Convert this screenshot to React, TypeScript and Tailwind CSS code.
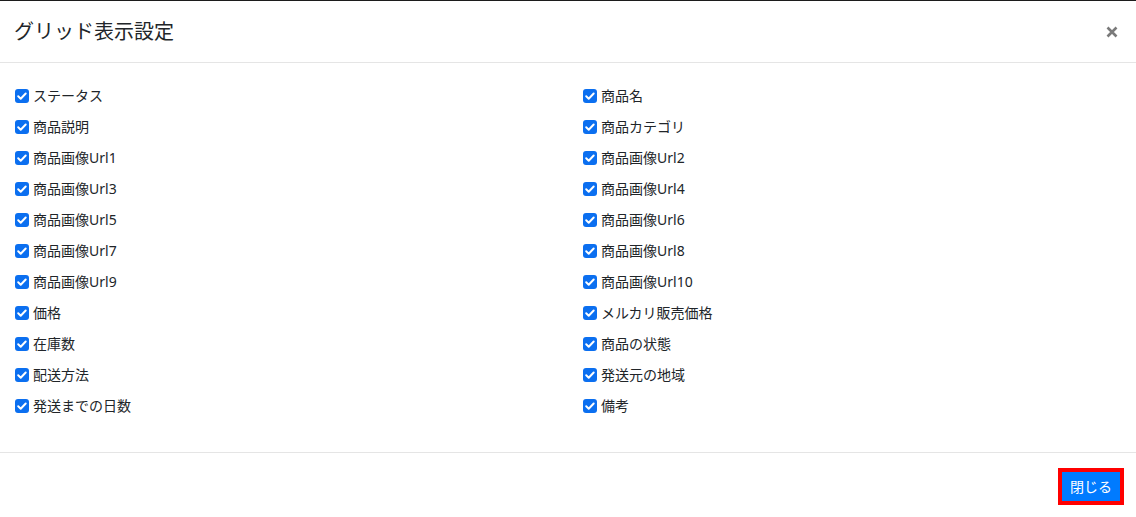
const columns: [string, string][] = [
  ["ステータス", "商品名"],
  ["商品説明", "商品カテゴリ"],
  ["商品画像Url1", "商品画像Url2"],
  ["商品画像Url3", "商品画像Url4"],
  ["商品画像Url5", "商品画像Url6"],
  ["商品画像Url7", "商品画像Url8"],
  ["商品画像Url9", "商品画像Url10"],
  ["価格", "メルカリ販売価格"],
  ["在庫数", "商品の状態"],
  ["配送方法", "発送元の地域"],
  ["発送までの日数", "備考"],
];

function Check({ label }: { label: string }) {
  return (
    <label className="flex h-[31px] items-center gap-[4px] text-[14px] text-[#212529]">
      <span className="flex h-[14px] w-[14px] shrink-0 items-center justify-center rounded-[3px] bg-[#0b6ff0]">
        <svg viewBox="0 0 14 14" className="h-[14px] w-[14px]">
          <path
            d="M3.2 7.3l2.5 2.4 5-5.2"
            fill="none"
            stroke="white"
            strokeWidth="2"
            strokeLinecap="round"
            strokeLinejoin="round"
          />
        </svg>
      </span>
      <span>{label}</span>
    </label>
  );
}

export default function App() {
  return (
    <div
      className="h-[517px] w-[1136px] overflow-hidden bg-white"
      style={{ fontFamily: '"Noto Sans", "Noto Sans CJK JP", sans-serif' }}
    >
      <div className="h-px bg-[#1c1c1c]" />
      <div className="flex h-[62px] items-center justify-between border-b border-[#e5e5e5] pl-[14px] pr-[17px]">
        <h5 className="text-[20px] leading-none text-[#212529]">グリッド表示設定</h5>
        <button className="flex h-[14px] w-[14px] items-center justify-center" aria-label="close">
          <svg viewBox="0 0 12 12" className="h-[12px] w-[12px]">
            <path d="M1.5 1.5l9 9M10.5 1.5l-9 9" stroke="#7a7a7a" strokeWidth="2.6" />
          </svg>
        </button>
      </div>
      <div className="grid h-[389px] grid-cols-[568px_1fr] content-start pl-[15px] pr-[16px] pt-[17px]">
        {columns.map(([left, right]) => (
          <div key={left} className="contents">
            <Check label={left} />
            <Check label={right} />
          </div>
        ))}
      </div>
      <div className="flex h-[65px] items-center justify-end border-t border-[#e5e5e5] pr-[12px] pt-[2px]">
        <button className="border-4 border-[#ff0000] bg-[#007bff] px-[8px] py-[4px] text-[14px] leading-[21px] text-white">
          閉じる
        </button>
      </div>
    </div>
  );
}
